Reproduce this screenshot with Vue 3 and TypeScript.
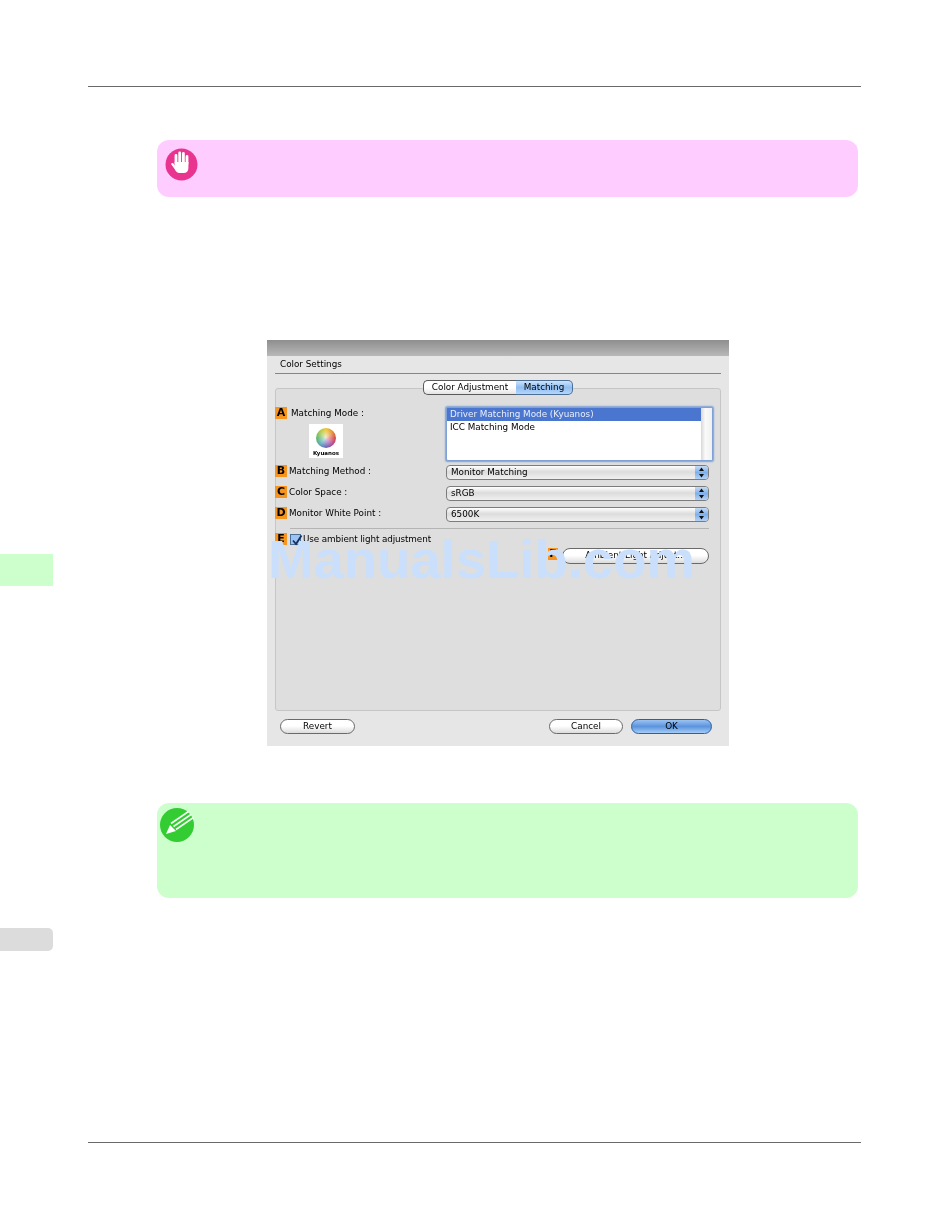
<script setup lang="ts">
const selects = [
  { badge: 'B', label: 'Matching Method :', value: 'Monitor Matching' },
  { badge: 'C', label: 'Color Space :', value: 'sRGB' },
  { badge: 'D', label: 'Monitor White Point :', value: '6500K' },
];
</script>

<template>
  <div class="page">
    <aside class="side">
      <div class="side-tab green"></div>
      <div class="side-tab grey"></div>
    </aside>

    <main class="main">
      <div class="rule top"></div>

      <section class="note pink">
        <svg class="note-icon" viewBox="0 0 33 33">
          <circle cx="16.5" cy="16.5" r="16" fill="#e8348f" />
          <path d="M11 15V7.500M14.700 15V5M18.400 15V5.500M22 16V8.500" stroke="#fff" stroke-width="2.800" stroke-linecap="round" fill="none" />
          <path d="M9.600 14h13.800v6q0 5-5 5h-4q-3 0-4.800-4L6 16q1-1.500 2.500-.5l1.100 2z" fill="#fff" />
        </svg>
      </section>

      <section class="dialog">
        <div class="titlebar"></div>
        <div class="heading">Color Settings</div>

        <div class="panel">
          <div class="tabs">
            <span class="tab">Color Adjustment</span>
            <span class="tab on">Matching</span>
          </div>

          <div class="row row-list">
            <div class="left">
              <div class="label-line">
                <span class="badge">A</span>
                <span class="label first">Matching Mode :</span>
              </div>
              <div class="logo">
                <span class="wheel"></span>
                <span class="logo-text">Kyuanos</span>
              </div>
            </div>
            <div class="listbox">
              <div class="items">
                <div class="item sel">Driver Matching Mode (Kyuanos)</div>
                <div class="item">ICC Matching Mode</div>
              </div>
              <div class="scroll"></div>
            </div>
          </div>

          <div v-for="s in selects" :key="s.badge" class="row row-select">
            <div class="left">
              <div class="label-line">
                <span class="badge">{{ s.badge }}</span>
                <span class="label">{{ s.label }}</span>
              </div>
            </div>
            <div class="select">
              <span class="select-value">{{ s.value }}</span>
              <span class="stepper">
                <svg width="7" height="11" viewBox="0 0 7 11">
                  <path d="M3.500 0.500L6 4H1zM3.500 10.500L1 7h5z" fill="#111" />
                </svg>
              </span>
            </div>
          </div>

          <div class="sep"></div>

          <div class="check-row">
            <span class="badge">E</span>
            <span class="checkbox">
              <svg width="12" height="12" viewBox="0 0 12 12">
                <path d="M2 5.500l3 3.500 5.500-8.500" fill="none" stroke="#14305f" stroke-width="1.800" />
              </svg>
            </span>
            <span class="label tight">Use ambient light adjustment</span>
          </div>

          <div class="ambient-row">
            <span class="badge small">F</span>
            <span class="btn ambient">Ambient Light Adjust...</span>
          </div>
        </div>

        <div class="footer">
          <span class="btn revert">Revert</span>
          <span class="spacer"></span>
          <span class="btn cancel">Cancel</span>
          <span class="btn ok">OK</span>
        </div>

        <div class="watermark">ManualsLib.com</div>
      </section>

      <section class="note green-note">
        <svg class="note-icon pencil" viewBox="0 0 36 36">
          <circle cx="17" cy="18" r="17" fill="#33cc33" />
          <path d="M6 27l4-9 6 6z" fill="#fff" />
          <path d="M11 16.500L28.500 4.500M13.500 19.500L31 7.500M16 22.500L33.500 10.500" stroke="#f2fdf2" stroke-width="1.600" fill="none" />
        </svg>
      </section>

      <div class="rule bottom"></div>
    </main>
  </div>
</template>

<style>
html,
body {
  margin: 0;
  background: #fff;
}
</style>

<style scoped>
.page {
  display: flex;
  width: 950px;
  height: 1229px;
  overflow: hidden;
  background: #fff;
  font-family: "DejaVu Sans", sans-serif;
  color: #000;
}

.side {
  width: 53px;
  flex: none;
  padding-top: 554px;
  box-sizing: border-box;
}

.side-tab.green {
  height: 32px;
  background: #ccffcc;
}

.side-tab.grey {
  height: 23px;
  margin-top: 342px;
  background: #dcdcdc;
  border-radius: 0 5px 5px 0;
}

.main {
  width: 773px;
  margin-left: 35px;
}

.rule {
  height: 1px;
  background: #6a6a6a;
}

.rule.top {
  margin-top: 86px;
}

.rule.bottom {
  margin-top: 244px;
}

.note {
  width: 701px;
  margin-left: 69px;
  border-radius: 12px;
  box-sizing: border-box;
}

.note.pink {
  height: 57px;
  margin-top: 53px;
  padding: 8px 0 0 8px;
  background: #ffccff;
}

.note.green-note {
  height: 95px;
  margin-top: 57px;
  padding: 4px 0 0 3px;
  background: #ccffcc;
}

.note-icon {
  display: block;
  width: 33px;
  height: 33px;
}

.note-icon.pencil {
  width: 36px;
  height: 36px;
}

.dialog {
  position: relative;
  width: 462px;
  height: 406px;
  margin: 143px 0 0 179px;
  background: #e6e6e6;
  font-size: 8.800px;
  filter: blur(0.35px);
}

.titlebar {
  height: 16px;
  background: linear-gradient(#8e8e8e, #b8b8b8);
}

.heading {
  height: 17px;
  margin: 0 8px;
  padding-left: 5px;
  line-height: 17px;
  border-bottom: 1.500px solid #858585;
}

.panel {
  height: 323px;
  margin: 13.500px 8px 0;
  box-sizing: border-box;
  background: #dedede;
  border: 1px solid #c6c6c6;
  border-radius: 3px;
}

.tabs {
  display: flex;
  justify-content: center;
  height: 15px;
  margin-top: -9px;
}

.tab {
  display: block;
  width: 93px;
  line-height: 13px;
  text-align: center;
  box-sizing: border-box;
  border: 1px solid #5a5a5a;
  border-right: 0;
  border-radius: 5px 0 0 5px;
  background: linear-gradient(#fff 50%, #e4e4e4);
}

.tab.on {
  width: 57px;
  border: 1px solid #4d6f96;
  border-left: 0;
  border-radius: 0 5px 5px 0;
  background: linear-gradient(#cfe3fb, #8fbef3 50%, #b5d6f8);
}

.row {
  display: flex;
}

.row-list {
  height: 54px;
  margin-top: 12px;
}

.row-select {
  height: 15px;
  margin-top: 6px;
}

.row-list + .row-select {
  margin-top: 4px;
}

.left {
  width: 170px;
  flex: none;
}

.label-line {
  display: flex;
  align-items: center;
  height: 12px;
}

.badge {
  display: block;
  width: 12px;
  height: 12px;
  flex: none;
  margin-left: -1px;
  background: #f7941d;
  color: #000;
  font-size: 11px;
  font-weight: bold;
  line-height: 12px;
  text-align: center;
}

.label {
  margin-left: 2px;
  white-space: nowrap;
}

.label.first {
  margin-left: 4px;
}

.label.tight {
  letter-spacing: -0.1px;
}

.logo {
  width: 34px;
  height: 34px;
  margin: 5px 0 0 33px;
  background: #fff;
  display: flex;
  flex-direction: column;
  align-items: center;
  box-sizing: border-box;
  padding-top: 4px;
}

.wheel {
  display: block;
  width: 20px;
  height: 20px;
  border-radius: 50%;
  background:
    radial-gradient(circle at 50% 50%, rgba(255, 255, 255, 0.75), rgba(255, 255, 255, 0) 65%),
    conic-gradient(#e8c838, #e89030, #d84848, #b04898, #6c68b8, #58a8c0, #60b868, #a8c850, #e8c838);
}

.logo-text {
  margin-top: 1px;
  font-size: 5.500px;
  font-weight: bold;
  line-height: 8px;
}

.listbox {
  display: flex;
  width: 267px;
  height: 54px;
  box-sizing: border-box;
  border: 1px solid #7fa2d6;
  box-shadow: 0 0 1.500px 0.500px #7fa2d6;
  border-radius: 2px;
  background: #fff;
}

.items {
  flex: 1;
}

.item {
  height: 13px;
  padding-left: 3px;
  line-height: 13px;
}

.item.sel {
  background: #4a76d0;
  color: #e8eefb;
}

.scroll {
  width: 11px;
  background: linear-gradient(90deg, #d8d8d8, #fafafa 40%, #f0f0f0);
}

.select {
  display: flex;
  align-items: center;
  width: 263px;
  height: 15px;
  box-sizing: border-box;
  border: 1px solid #7c7c7c;
  border-radius: 4px;
  background: linear-gradient(#fff, #dcdcdc 45%, #f0f0f0);
  overflow: hidden;
}

.select-value {
  flex: 1;
  padding-left: 4px;
}

.stepper {
  display: flex;
  align-items: center;
  justify-content: center;
  width: 13px;
  height: 100%;
  background: linear-gradient(#c5dcf7, #7eb0ec 50%, #b4d2f5);
}

.sep {
  height: 1px;
  width: 419px;
  margin: 6px 0 0 14px;
  background: #b4b4b4;
}

.check-row {
  display: flex;
  align-items: center;
  height: 13px;
  margin-top: 4px;
}

.checkbox {
  display: block;
  width: 11px;
  height: 11px;
  margin-left: 3px;
  box-sizing: border-box;
  border: 1px solid #4d6f96;
  background: #9cc3f2;
}

.ambient-row {
  display: flex;
  justify-content: flex-end;
  align-items: flex-start;
  margin: 2px 11px 0 0;
}

.badge.small {
  width: 10px;
  margin-right: 4px;
}

.btn {
  display: block;
  height: 15px;
  box-sizing: border-box;
  border: 1px solid #6a6a6a;
  border-radius: 8px;
  background: linear-gradient(#fff 45%, #dcdcdc);
  line-height: 13px;
  text-align: center;
}

.ambient {
  width: 147px;
  height: 16px;
}

.footer {
  display: flex;
  margin-top: 8px;
  padding: 0 17px 0 13px;
}

.spacer {
  flex: 1;
}

.revert {
  width: 75px;
}

.cancel {
  width: 74px;
  margin-right: 8px;
}

.ok {
  width: 81px;
  border-color: #2f5f9e;
  background: linear-gradient(#9cc3f2, #5b93dd 50%, #a5cdf6);
}

.watermark {
  position: absolute;
  left: 1px;
  top: 192px;
  color: #c9dffb;
  font-family: "Liberation Sans", sans-serif;
  font-size: 54.500px;
  font-weight: bold;
  line-height: 56px;
  white-space: nowrap;
}
</style>
